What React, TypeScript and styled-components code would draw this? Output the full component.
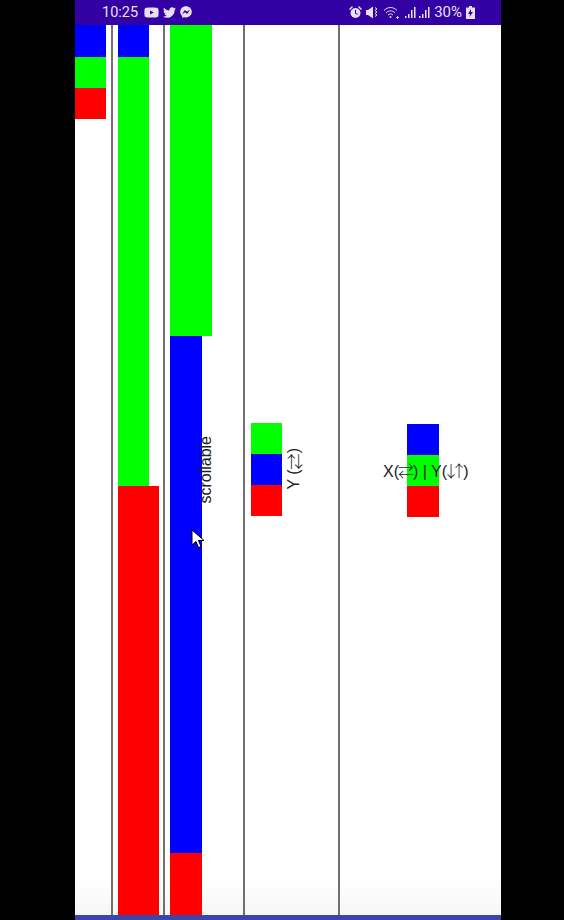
import React from 'react';
import styled, {createGlobalStyle} from 'styled-components';
import {FaFacebookMessenger, FaTwitter, FaYoutube} from 'react-icons/fa';

const GlobalStyle = createGlobalStyle`
    html, body {
        margin: 0;
        height: 100%;
        background: #000;
    }
    #root {
        height: 100%;
    }
`

const Page = styled.div`
    height: 920px;
    box-sizing: border-box;
    padding: 0 63px 0 75px;
    background: #000;
    font-family: "Liberation Sans", Arial, sans-serif;
`

const Phone = styled.div`
    position: relative;
    height: 100%;
    display: flex;
    flex-direction: column;
    background: #fff;
    overflow: hidden;
`

const StatusBar = styled.div`
    height: 25px;
    flex: none;
    display: flex;
    align-items: center;
    justify-content: space-between;
    padding: 0 26px 1px 27px;
    box-sizing: border-box;
    background: #3300a3;
    color: #e8e0f0;
`

const StatusGroup = styled.div<{$gap: number}>`
    display: flex;
    align-items: center;
    gap: ${p => p.$gap}px;
`

const Clock = styled.span`
    font: 14.5px Roboto, sans-serif;
    margin-right: 2px;
`

const Percent = styled.span`
    font: 15px Roboto, sans-serif;
`

const Columns = styled.div`
    flex: 1;
    min-height: 0;
    display: grid;
    grid-template-columns: 38px 52px 80px 95px 1fr;
    background: linear-gradient(#fff 96%, #f6f6f6);
`

const Column = styled.div<{$last?: boolean}>`
    position: relative;
    min-width: 0;
    box-sizing: border-box;
    border-right: ${p => p.$last ? 'none' : '2px solid #707070'};
    overflow: hidden;
`

const Stack = styled.div<{$left: number}>`
    display: flex;
    flex-direction: column;
    align-items: flex-start;
    height: 100%;
    padding-left: ${p => p.$left}px;
`

const Centered = styled.div<{$left: number; $bottom?: number}>`
    height: 100%;
    box-sizing: border-box;
    display: flex;
    align-items: center;
    gap: 3px;
    padding: 0 0 ${p => p.$bottom ?? 0}px ${p => p.$left}px;
`

const Small = styled.div`
    display: flex;
    flex-direction: column;
`

const Bar = styled.div<{$color: string; $w: number; $h: number}>`
    width: ${p => p.$w}px;
    height: ${p => p.$h}px;
    flex: none;
    background: ${p => p.$color};
`

const SideLabel = styled.span`
    writing-mode: vertical-rl;
    transform: rotate(180deg);
    font-size: 16px;
    line-height: 18px;
    color: #222;
    white-space: nowrap;
`

const ScrollLabel = styled(SideLabel)`
    position: absolute;
    left: 32px;
    top: 411px;
`

const OverLabel = styled.span`
    position: absolute;
    left: 43px;
    top: 436px;
    font-size: 16px;
    line-height: 18px;
    color: #222;
    white-space: nowrap;
`

const SwapArrows = styled.span`
    font-family: "Noto Sans CJK SC", "Liberation Sans", sans-serif;
    font-weight: 300;
    margin: 0 -1px;
`

// стрелки в шрифте широкие, поэтому сжимаем их до ширины обычной буквы
const UpDownArrows = styled.span`
    font-family: "Noto Sans CJK SC", "Liberation Sans", sans-serif;
    font-weight: 300;
    letter-spacing: -8px;
    margin: 0 4px 0 -4px;
`

const Cursor = styled.svg`
    position: absolute;
    left: 116px;
    top: 529px;
`

const BottomBar = styled.div`
    height: 5px;
    flex: none;
    background: #3c46aa;
`

const BLUE = '#0000ff'
const GREEN = '#00ff00'
const RED = '#ff0000'

function App() {
    return (
        <Page>
            <GlobalStyle/>
            <Phone>
                <StatusBar>
                    <StatusGroup $gap={4}>
                        <Clock>10:25</Clock>
                        <FaYoutube size={15}/>
                        <FaTwitter size={13}/>
                        <FaFacebookMessenger size={12}/>
                    </StatusGroup>
                    <StatusGroup $gap={4}>
                        {/* будильник */}
                        <svg width="13" height="13" viewBox="0 0 13 13" fill="currentColor">
                            <circle cx="6.5" cy="7" r="5"/>
                            <path d="M0 3 3 0l1 1-3 3zM13 3l-3-3-1 1 3 3z"/>
                            <path d="M6 4h1v3l2 1-.5.8L6 7.5z" fill="#3300a3"/>
                        </svg>
                        {/* без звука */}
                        <svg width="13" height="13" viewBox="0 0 13 13" fill="currentColor">
                            <path d="M0 4h2l5-3.500v12L2 9H0z"/>
                            <path d="M9 1.500l2 1.500-2 1.500 2 1.500-2 1.500 2 1.500-2 1.500" fill="none" stroke="currentColor"/>
                        </svg>
                        {/* wifi */}
                        <svg width="17" height="13" viewBox="0 0 17 13" fill="none" stroke="currentColor">
                            <path d="M1 4.500C5 .5 10 .5 14 4.500M3 6.800c3-2.600 6-2.600 9 0M5 9c1.700-1.400 3.300-1.400 5 0"/>
                            <circle cx="7.500" cy="11" r="1" fill="currentColor" stroke="none"/>
                            <path d="M14.500 10v3M13 11.500h3" strokeWidth=".8"/>
                        </svg>
                        <StatusGroup $gap={2}>
                            <Signal/>
                            <Signal/>
                        </StatusGroup>
                        <Percent>30%</Percent>
                        {/* батарея */}
                        <svg width="9" height="13" viewBox="0 0 9 13" fill="currentColor">
                            <path d="M3 0h3v1.500h3V13H0V1.500h3z"/>
                            <path d="M5 3 2 8h2l-.5 3L7 6H5z" fill="#3300a3"/>
                        </svg>
                    </StatusGroup>
                </StatusBar>
                <Columns>
                    <Column>
                        <Stack $left={0}>
                            <Bar $color={BLUE} $w={31} $h={32}/>
                            <Bar $color={GREEN} $w={31} $h={31}/>
                            <Bar $color={RED} $w={31} $h={31}/>
                        </Stack>
                    </Column>
                    <Column>
                        <Stack $left={5}>
                            <Bar $color={BLUE} $w={31} $h={32}/>
                            <Bar $color={GREEN} $w={31} $h={429}/>
                            <Bar $color={RED} $w={41} $h={429}/>
                        </Stack>
                    </Column>
                    <Column>
                        <Stack $left={5}>
                            <Bar $color={GREEN} $w={42} $h={311}/>
                            <Bar $color={BLUE} $w={32} $h={517}/>
                            <Bar $color={RED} $w={32} $h={62}/>
                        </Stack>
                        <ScrollLabel>scrollable</ScrollLabel>
                    </Column>
                    <Column>
                        <Centered $left={6} $bottom={2}>
                            <Small>
                                <Bar $color={GREEN} $w={31} $h={31}/>
                                <Bar $color={BLUE} $w={31} $h={31}/>
                                <Bar $color={RED} $w={31} $h={31}/>
                            </Small>
                            <SideLabel>Y (<SwapArrows>⇄</SwapArrows>)</SideLabel>
                        </Centered>
                    </Column>
                    <Column $last>
                        <Centered $left={67}>
                            <Small>
                                <Bar $color={BLUE} $w={32} $h={31}/>
                                <Bar $color={GREEN} $w={32} $h={31}/>
                                <Bar $color={RED} $w={32} $h={31}/>
                            </Small>
                        </Centered>
                        <OverLabel>X(<SwapArrows>⇄</SwapArrows>) | Y(<UpDownArrows>↓↑</UpDownArrows>)</OverLabel>
                    </Column>
                </Columns>
                <BottomBar/>
                <Cursor width="14" height="20" viewBox="0 0 14 20">
                    <path d="M1 1v15l4-3.500 2.500 6 2.500-1-2.500-6H13z" fill="#fff" stroke="#000"/>
                </Cursor>
            </Phone>
        </Page>
    );
}

function Signal() {
    return (
        <svg width="12" height="13" viewBox="0 0 12 13" fill="currentColor">
            <path d="M1 10h1.500v2H1zM4 8h1.500v4H4zM7 4h1.500v8H7zM10 1h1.500v11H10z"/>
        </svg>
    );
}

export default App;
